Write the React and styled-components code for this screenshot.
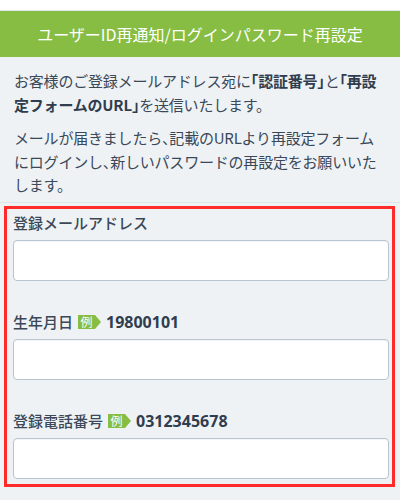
import React from "react";
import styled, { createGlobalStyle } from "styled-components";

const GlobalStyle = createGlobalStyle`
  html, body {
    margin: 0;
    padding: 0;
    background: #eff2f5;
    font-family: "Noto Sans CJK JP", "Noto Sans", sans-serif;
    color: #3a4858;
  }
  * { box-sizing: border-box; }
`;

const Page = styled.div`
  width: 400px;
  height: 500px;
  overflow: hidden;
  background: #eff2f5;
`;

const TopStrip = styled.div`
  height: 11px;
  background: #ffffff;
  border-bottom: 1px solid #e2e6ea;
`;

const Header = styled.h1`
  margin: 0;
  height: 46px;
  background: #86bd42;
  color: #ffffff;
  font-size: 16px;
  font-weight: 400;
  display: flex;
  align-items: center;
  justify-content: center;
`;

const Intro = styled.div`
  padding: 12px 12px 5px 14px;
  border-bottom: 1px solid #dfe4ea;
`;

const Para = styled.p`
  margin: 0;
  font-size: 15px;
  line-height: 24px;
  letter-spacing: -0.2px;
  & + & {
    margin-top: 9px;
    line-height: 23.5px;
  }
  strong {
    font-weight: 700;
    color: #2f3d4e;
  }
`;

// half-width brackets like the reference's proportional punctuation
const Bracket = styled.span`
  font-feature-settings: "halt";
`;

const FormBox = styled.div`
  margin: 3px 5px 0 4px;
  border: 3.5px solid #ff2a2a;
  padding: 2px 3px 5px 6px;
`;

const Field = styled.div`
  & + & {
    margin-top: 29px;
  }
`;

const Label = styled.label`
  display: flex;
  align-items: center;
  height: 24px;
  margin-bottom: 5px;
  font-size: 15px;
  font-weight: 500;
  color: #3a4858;
`;

const Badge = styled.span`
  position: relative;
  display: inline-flex;
  align-items: center;
  justify-content: center;
  width: 17px;
  height: 14px;
  margin: 0 11px 0 5px;
  background: #86bd42;
  color: #ffffff;
  font-size: 12px;
  font-weight: 400;
  line-height: 1;
  &::after {
    content: "";
    position: absolute;
    right: -6px;
    top: 0;
    border-top: 7px solid transparent;
    border-bottom: 7px solid transparent;
    border-left: 6px solid #86bd42;
  }
`;

const Example = styled.span`
  font-size: 16px;
  font-weight: 700;
  color: #2f3d4e;
  font-family: "Noto Sans", "Noto Sans CJK JP", sans-serif;
`;

const Input = styled.input`
  display: block;
  width: 100%;
  height: 41px;
  border: 1.5px solid #b7c4d2;
  border-radius: 4px;
  background: #ffffff;
  box-shadow: inset 0 1px 1px rgba(0, 0, 0, 0.04);
  font-size: 15px;
  padding: 0 10px;
  outline: none;
`;

const fields = [
  { label: "登録メールアドレス", type: "email" },
  { label: "生年月日", example: "19800101", type: "tel" },
  { label: "登録電話番号", example: "0312345678", type: "tel" },
];

const App = () => {
  return (
    <>
      <GlobalStyle />
      <Page>
        <TopStrip />
        <Header>ユーザーID再通知/ログインパスワード再設定</Header>
        <Intro>
          <Para>
            お客様のご登録メールアドレス宛に
            <strong>
              <Bracket>「</Bracket>認証番号<Bracket>」</Bracket>
            </strong>
            と
            <strong>
              <Bracket>「</Bracket>再設定フォームのURL<Bracket>」</Bracket>
            </strong>
            を送信いたします。
          </Para>
          <Para>
            メールが届きましたら<Bracket>、</Bracket>記載のURLより再設定フォームにログインし<Bracket>、</Bracket>新しいパスワードの再設定をお願いいたします。
          </Para>
        </Intro>
        <FormBox>
          {fields.map((f) => (
            <Field key={f.label}>
              <Label>
                {f.label}
                {f.example ? (
                  <>
                    <Badge>例</Badge>
                    <Example>{f.example}</Example>
                  </>
                ) : null}
              </Label>
              <Input type={f.type} />
            </Field>
          ))}
        </FormBox>
      </Page>
    </>
  );
};

export default App;
